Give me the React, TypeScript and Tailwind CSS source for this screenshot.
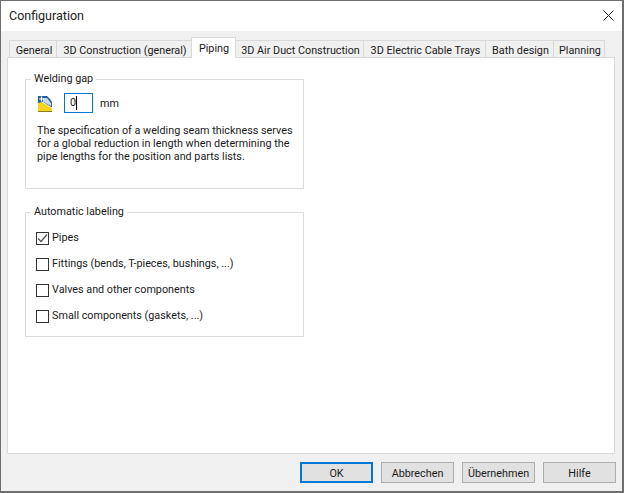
const tabs = [
  { label: 'General', width: 'w-[48px]' },
  { label: '3D Construction (general)', width: 'w-[135px]' },
  { label: 'Piping', width: 'w-[45px]', active: true },
  { label: '3D Air Duct Construction', width: 'w-[128px]' },
  { label: '3D Electric Cable Trays', width: 'w-[122px]' },
  { label: 'Bath design', width: 'w-[68px]' },
  { label: 'Planning', width: 'w-[51px]' },
];

const labels = [
  { label: 'Pipes', checked: true },
  { label: 'Fittings (bends, T-pieces, bushings, ...)' },
  { label: 'Valves and other components' },
  { label: 'Small components (gaskets, ...)' },
];

const buttons = [
  { label: 'OK', width: 'w-[73px]', primary: true },
  { label: 'Abbrechen', width: 'w-[73px]' },
  { label: 'Übernehmen', width: 'w-[73px]' },
  { label: 'Hilfe', width: 'w-[73px]' },
];

const WeldIcon = () => (
  <svg width="16" height="16" viewBox="0 0 16 16" className="shrink-0 mt-[2px]">
    <path d="M1 0h9l3 3 2 3v10H1z" fill="#1f5f9a" />
    <path d="M6 2h4l4 5v3L6 6z" fill="#c9d8e6" />
    <path d="M10 1l4 5h1v5l-1-1V7z" fill="#3d6f9e" />
    <path d="M1 15V7l4-1 10 6v3z" fill="#f7d31c" />
    <path d="M5 6l10 6" stroke="#fff6b0" strokeWidth="1" />
    <path d="M1 15.5h14" stroke="#8d7a18" strokeWidth="1" />
    <path d="M4.5 0.5v5M2 3h5" stroke="#ffffff" strokeWidth="1.2" />
  </svg>
);

const Check = ({ checked }: { checked?: boolean }) => (
  <span className="w-[13px] h-[13px] border border-[#333333] bg-white flex items-center justify-center shrink-0">
    {checked && (
      <svg width="11" height="11" viewBox="0 0 11 11">
        <path d="M1 5.5l3 3 6-7" fill="none" stroke="#555555" strokeWidth="1.3" />
      </svg>
    )}
  </span>
);

export default function App() {
  return (
    <div
      className="w-[624px] h-[493px] bg-[#f0f0f0] border border-[#6e6e6e] border-r-2 border-b-2 flex flex-col text-[10.8px] text-[#1a1a1a] overflow-hidden"
      style={{ fontFamily: 'Roboto, "Open Sans", sans-serif' }}
    >
      {/* Title bar */}
      <div className="h-[30px] bg-white flex items-center justify-between pl-[8px] pr-[8px] shrink-0">
        <span className="text-[12.5px] text-[#222222]">Configuration</span>
        <svg width="11" height="11" viewBox="0 0 11 11" className="mb-[2px]">
          <path d="M0.5 0.5l10 10M10.5 0.5l-10 10" stroke="#222222" strokeWidth="1" />
        </svg>
      </div>

      {/* Tabs */}
      <div className="h-[27px] flex items-end pl-[8px] shrink-0 relative z-10 -mb-px">
        {tabs.map((t) => (
          <div
            key={t.label}
            className={`${t.width} flex items-center justify-center border-t border-r border-[#d9d9d9] first:border-l whitespace-nowrap ${
              t.active
                ? 'h-[21px] bg-white border-l -ml-px pt-[3px] pl-[1px]'
                : 'h-[18px] bg-[#f0f0f0] border-b pt-[5px] pl-[2px]'
            }`}
          >
            {t.label}
          </div>
        ))}
      </div>

      {/* Tab panel */}
      <div className="mx-[6px] w-[608px] h-[397px] bg-white border border-[#d9d9d9] px-[17px] pt-[13px] shrink-0">
        <fieldset className="w-[279px] min-w-0 h-[118px] border border-[#dcdcdc] pl-[11px] pr-[8px]">
          <legend className="-ml-[6px] px-[3px] leading-[16px]">Welding gap</legend>
          <div className="flex items-center mt-[6px]">
            <WeldIcon />
            <div className="ml-[11px] w-[29px] h-[20px] border border-[#0078d7] flex items-center pl-[5px] leading-none">
              0<span className="w-px h-[14px] bg-black" />
            </div>
            <span className="ml-[7px] pt-[3px]">mm</span>
          </div>
          <p className="mt-[11px] leading-[13px] whitespace-nowrap">
            The specification of a welding seam thickness serves
            <br />
            for a global reduction in length when determining the
            <br />
            pipe lengths for the position and parts lists.
          </p>
        </fieldset>

        <fieldset className="w-[279px] min-w-0 h-[133px] mt-[15px] border border-[#dcdcdc] pl-[10px]">
          <legend className="-ml-[5px] px-[3px] leading-[16px]">Automatic labeling</legend>
          <div className="flex flex-col gap-[10px] mt-[10px]">
            {labels.map((l) => (
              <label key={l.label} className="h-[16px] flex items-center gap-[3px] whitespace-nowrap">
                <Check checked={l.checked} />
                {l.label}
              </label>
            ))}
          </div>
        </fieldset>
      </div>

      {/* Buttons */}
      <div className="flex justify-end gap-[8px] pr-[6px] mt-[8px]">
        {buttons.map((b) => (
          <button
            key={b.label}
            className={`${b.width} h-[21px] bg-[#e1e1e1] flex items-center justify-center pt-[3px] ${
              b.primary ? 'border-2 border-[#0078d7]' : 'border border-[#adadad]'
            }`}
          >
            {b.label}
          </button>
        ))}
      </div>
    </div>
  );
}
